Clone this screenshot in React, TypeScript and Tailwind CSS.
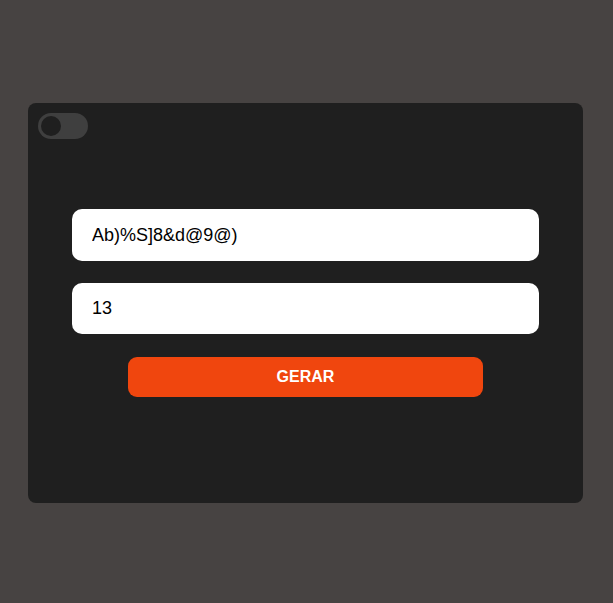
import React from "react";

export default function App() {
  return (
    <div
      className="w-[613px] h-[603px] bg-[#474342] pt-[103px] pl-[28px]"
      style={{ fontFamily: '"Liberation Sans", Arial, sans-serif' }}
    >
      <div className="w-[555px] h-[400px] rounded-lg bg-[#1f1f1f] flex flex-col">
        <div className="p-[10px]">
          <div className="w-[50px] h-[26px] rounded-full bg-[#3f3f3f] flex items-center pl-[3px]">
            <div className="w-[20px] h-[20px] rounded-full bg-[#1f1f1f]" />
          </div>
        </div>
        <div className="mt-[60px] px-[44px] flex flex-col">
          <input
            readOnly
            value="Ab)%S]8&d@9@)"
            className="h-[52px] w-full rounded-[10px] bg-white pl-[20px] text-[18px] text-black outline-none"
          />
          <input
            readOnly
            value="13"
            className="mt-[22px] h-[51px] w-full rounded-[10px] bg-white pl-[20px] text-[18px] text-black outline-none"
          />
          <div className="flex justify-center mt-[23px]">
            <button className="w-[355px] h-[40px] rounded-[9px] bg-[#f0460e] text-white font-bold text-[16px]">
              GERAR
            </button>
          </div>
        </div>
      </div>
    </div>
  );
}
